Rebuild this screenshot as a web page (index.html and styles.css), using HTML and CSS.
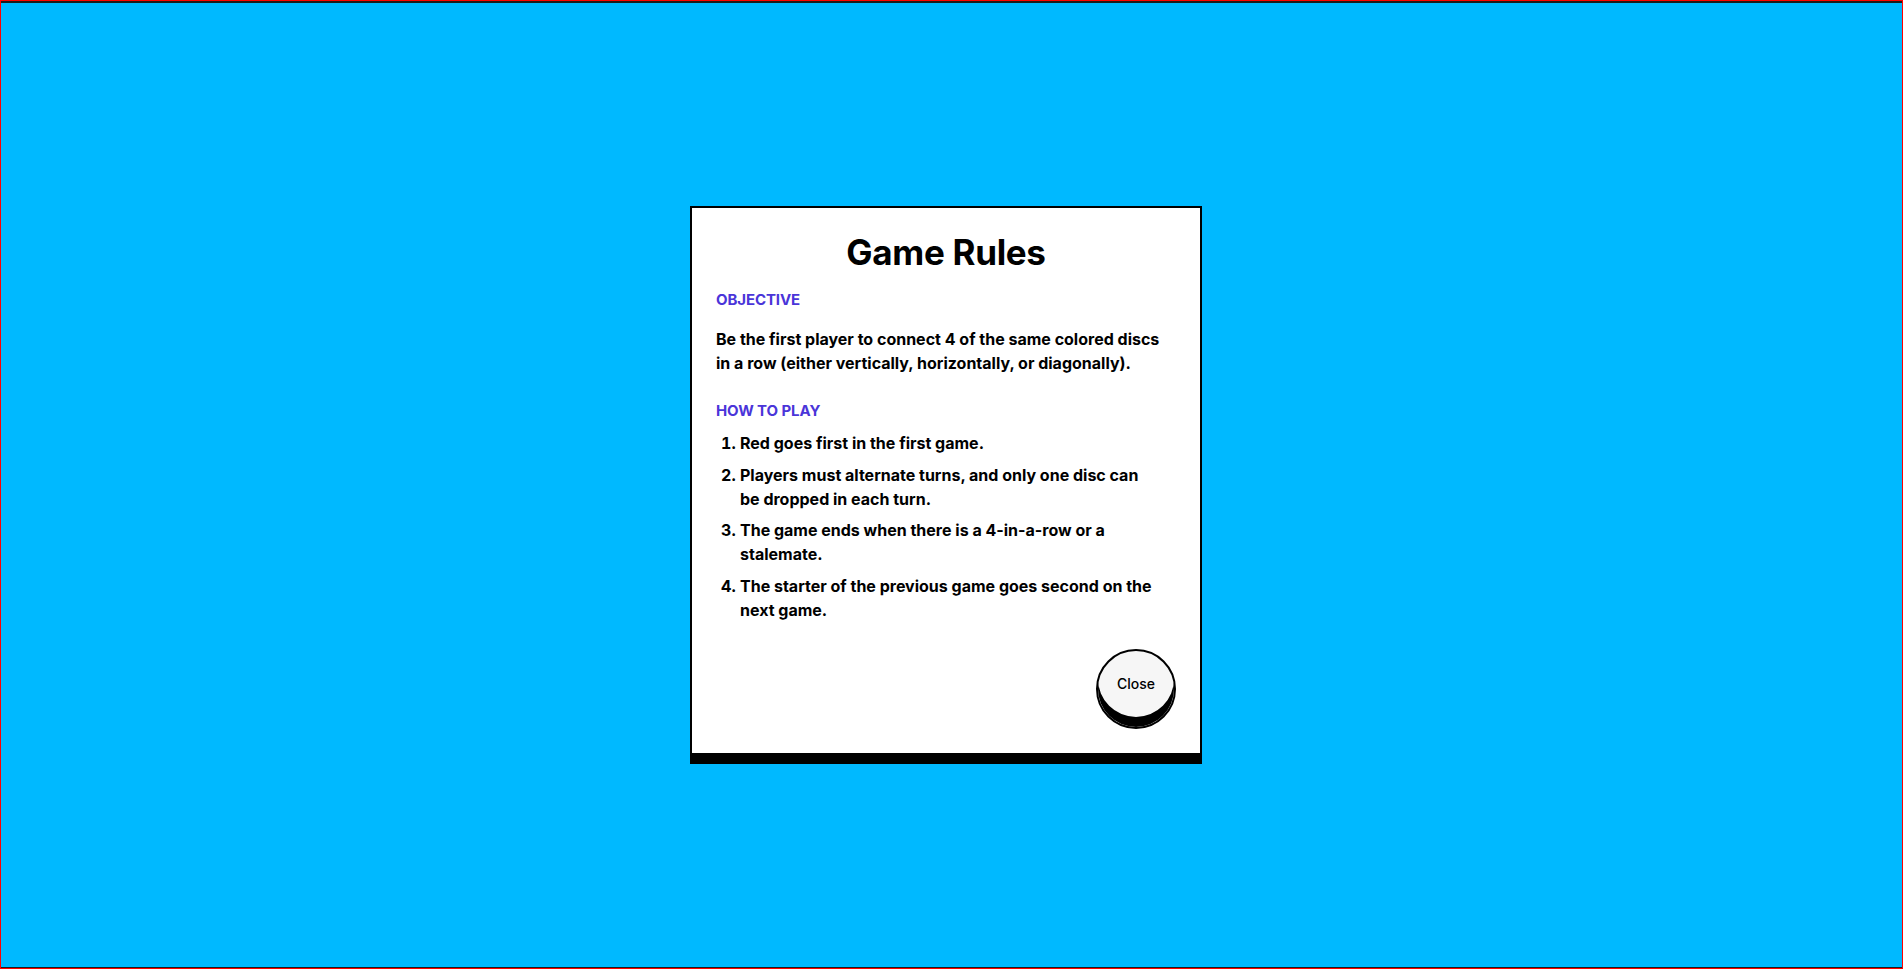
FILE: index.html
```html
<!DOCTYPE html>
<html lang="en">
<head>
<meta charset="utf-8">
<title>Game Rules</title>
<link rel="stylesheet" href="styles.css">
</head>
<body>
<div class="frame">
  <main class="stage">
    <section class="card">
      <h1 class="title">Game Rules</h1>
      <h2 class="label">OBJECTIVE</h2>
      <p class="text">Be the first player to connect 4 of the same colored discs in a row (either vertically, horizontally, or diagonally).</p>
      <h2 class="label label-play">HOW TO PLAY</h2>
      <ol class="steps">
        <li>Red goes first in the first game.</li>
        <li>Players must alternate turns, and only one disc can be dropped in each turn.</li>
        <li>The game ends when there is a 4-in-a-row or a stalemate.</li>
        <li>The starter of the previous game goes second on the next game.</li>
      </ol>
      <div class="actions">
        <button class="close">Close</button>
      </div>
    </section>
  </main>
</div>
</body>
</html>
```
FILE: styles.css
```css
* { box-sizing: border-box; }
html, body { margin: 0; padding: 0; height: 100%; }
body {
  font-family: Inter, "Noto Sans", sans-serif;
  color: #000;
}
.frame {
  height: 100vh;
  border: 1px solid #ff0000;
  display: flex;
  flex-direction: column;
}
.stage {
  flex: 1;
  background: #00b9ff;
  border-top: 2px solid #1c1c1c;
  border-bottom: 1px solid #1c1c1c;
  display: flex;
  align-items: center;
  justify-content: center;
  padding-right: 11px;
}
.card {
  width: 512px;
  background: #fff;
  border: 2px solid #000;
  border-bottom: 11px solid #000;
  padding: 22px 24px 24px 24px;
}
.title {
  margin: 0 0 17px;
  text-align: center;
  font-size: 35px;
  line-height: 44px;
  font-weight: 700;
  letter-spacing: -0.3px;
}
.label {
  margin: 0;
  font-size: 15px;
  line-height: 18px;
  font-weight: 700;
  color: #4a35d9;
  letter-spacing: -0.1px;
}
.text {
  margin: 18px 0 27px;
  padding-right: 8px;
  font-size: 16px;
  line-height: 24px;
  font-weight: 700;
}
.steps {
  margin: 11px 0 0;
  padding: 0 20px 0 24px;
  font-size: 16px;
  line-height: 24px;
  font-weight: 700;
}
.steps li { margin-bottom: 7.5px; }
.steps li:last-child { margin-bottom: 0; }
.actions {
  display: flex;
  justify-content: flex-end;
  margin-top: 27px;
}
.close {
  width: 80px;
  height: 80px;
  border-radius: 50%;
  border: 2px solid #000;
  background: #f6f6f6;
  box-shadow: inset 0 -10px 0 #000;
  font-family: Inter, "Noto Sans", sans-serif;
  font-size: 14px;
  font-weight: 500;
  padding: 0 0 10px;
  color: #000;
  cursor: pointer;
}
```
